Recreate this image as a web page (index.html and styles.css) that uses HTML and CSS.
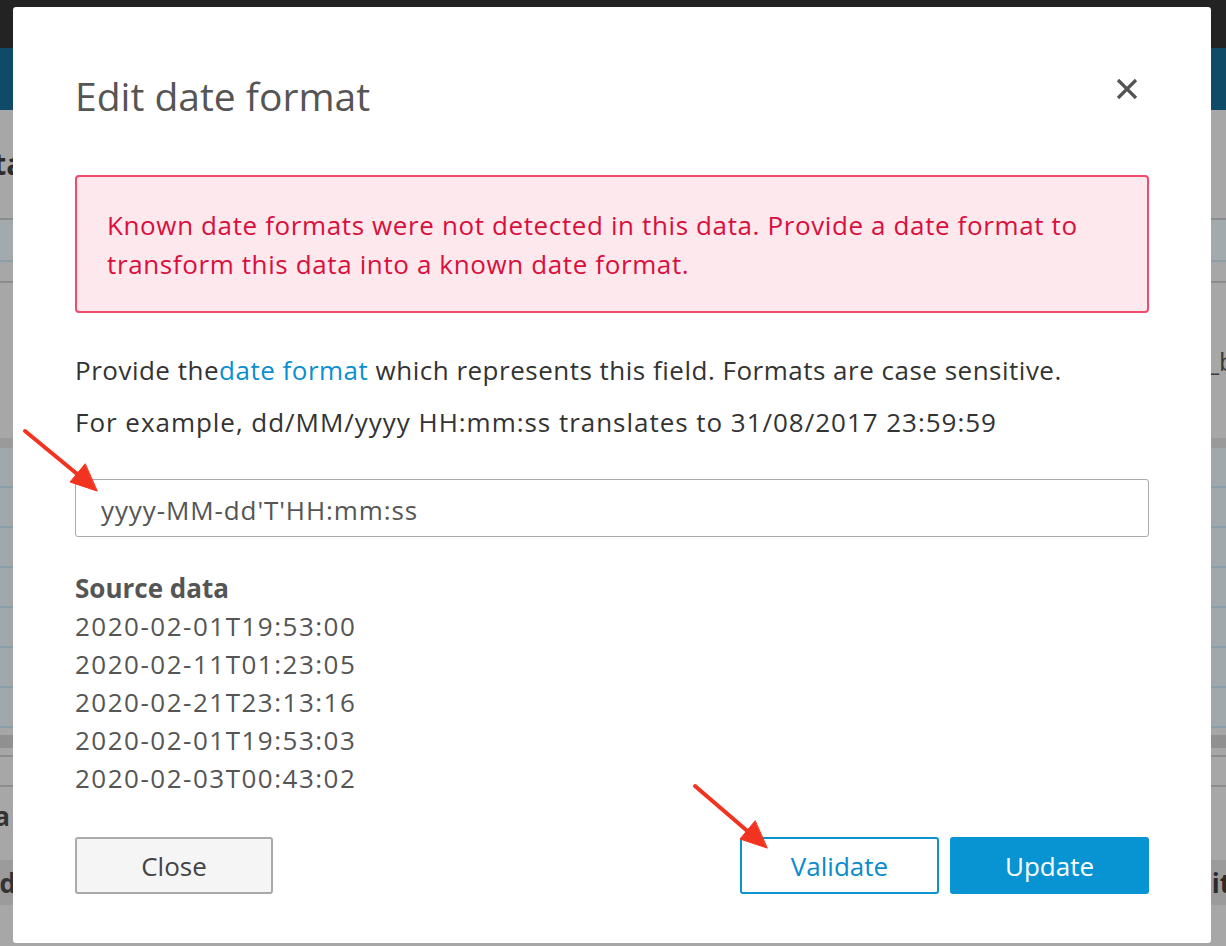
FILE: index.html
```html
<!DOCTYPE html>
<html lang="en">
<head>
<meta charset="utf-8">
<title>Edit date format</title>
<link rel="stylesheet" href="styles.css">
</head>
<body>
<div class="page">
  <div class="topbar"></div>
  <div class="navbar"></div>
  <div class="content">
    <div class="heading"><span class="h-left">Data</span></div>
    <div class="trow tint"></div>
    <div class="trow short"></div>
    <div class="side-label"><span class="r-text">field_b</span></div>
    <div class="band-dark"></div>
    <div class="grid">
      <div class="grow"></div><div class="grow"></div><div class="grow"></div><div class="grow"></div>
      <div class="grow"></div><div class="grow"></div><div class="grow"></div>
    </div>
    <div class="band"></div>
    <div class="plain"></div>
    <div class="label-row"><span class="l-text wide">Data</span></div>
    <div class="dark-row"><span class="l-text">Id</span><span class="r-text bold">Edit</span></div>
  </div>
</div>

<div class="modal" role="dialog" aria-labelledby="modal-title">
  <div class="modal-header">
    <h1 id="modal-title" class="modal-title">Edit date format</h1>
    <button class="icon-close" aria-label="Close">
      <svg width="22" height="22" viewBox="0 0 22 22"><path d="M2 2 L20 20 M20 2 L2 20" stroke="#545454" stroke-width="3.2" fill="none"/></svg>
    </button>
  </div>
  <div class="alert">Known date formats were not detected in this data. Provide a date format to transform this data into a known date format.</div>
  <p class="text first">Provide the<a class="link" href="#">date format</a> which represents this field. Formats are case sensitive.</p>
  <p class="text example">For example, dd/MM/yyyy HH:mm:ss translates to 31/08/2017 23:59:59</p>
  <input class="format-input" type="text" value="yyyy-MM-dd'T'HH:mm:ss">
  <div class="source">
    <div class="source-title">Source data</div>
    <div class="source-line">2020-02-01T19:53:00</div>
    <div class="source-line">2020-02-11T01:23:05</div>
    <div class="source-line">2020-02-21T23:13:16</div>
    <div class="source-line">2020-02-01T19:53:03</div>
    <div class="source-line">2020-02-03T00:43:02</div>
  </div>
  <div class="footer">
    <button class="btn btn-default">Close</button>
    <div class="footer-right">
      <button class="btn btn-outline">Validate</button>
      <button class="btn btn-primary">Update</button>
    </div>
  </div>
</div>

<svg class="arrows" width="1226" height="946" viewBox="0 0 1226 946">
  <g stroke="#f2331f" stroke-width="4" stroke-linecap="round" fill="#f2331f">
    <line x1="25" y1="431" x2="82" y2="478"/>
    <polygon points="97,491 70,482 85,464" stroke-width="1"/>
    <line x1="695" y1="786" x2="752" y2="835"/>
    <polygon points="767,848 740,839 755,821" stroke-width="1"/>
  </g>
</svg>
</body>
</html>
```

FILE: styles.css
```css
* { box-sizing: border-box; }
html, body { margin: 0; padding: 0; }
body {
  width: 1226px;
  height: 946px;
  overflow: hidden;
  position: relative;
  font-family: "Open Sans", "Noto Sans", sans-serif;
  background: #a6a6a6;
}

/* dimmed page behind the modal */
.page { width: 1226px; height: 946px; display: flex; flex-direction: column; }
.topbar { height: 48px; flex: none; background: #232323; }
.navbar { height: 62px; flex: none; background: #0f4b66; }
.content { flex: 1; display: flex; flex-direction: column; background: #a7a7a7; }
.content > div { flex: none; }
.heading { height: 108px; display: flex; align-items: center; padding-bottom: 2px; }
.h-left { font-size: 30px; font-weight: 700; color: #2c2c2c; margin-left: -47px; }
.trow.tint { height: 44px; border-top: 2px solid #8c8c8c; border-bottom: 2px solid #8e9ea6; background: #a2aaae; }
.trow.short { height: 21px; border-bottom: 2px solid #8c8c8c; }
.side-label { height: 155px; display: flex; justify-content: flex-end; align-items: center; }
.r-text { font-size: 26px; color: #3a3a3a; margin-right: -9px; }
.r-text.bold { font-weight: 700; color: #2a2a2a; margin-right: -5px; }
.band-dark { height: 10px; background: #9a9a9a; }
.grid { background: #a0a8ac; }
.grow { height: 40px; border-bottom: 2px solid #8a9ea9; }
.band { height: 27px; border-top: 7px solid #a6a6a6; border-bottom: 7px solid #a6a6a6; background: #909090; }
.plain { height: 32px; border-top: 2px solid #8d8d8d; border-bottom: 2px solid #8d8d8d; }
.label-row { height: 73px; display: flex; align-items: center; padding-bottom: 16px; }
.l-text { font-size: 26px; font-weight: 700; color: #333; margin-left: -9px; }
.l-text.wide { margin-left: -52px; }
.dark-row { height: 45px; background: #9b9b9b; display: flex; justify-content: space-between; align-items: center; }

/* modal */
.modal {
  position: absolute;
  left: 13px;
  top: 7px;
  width: 1198px;
  height: 936px;
  background: #fff;
  border-radius: 3px;
  padding: 66px 62px 50px;
  display: flex;
  flex-direction: column;
  color: #444;
}
.modal-header { display: flex; justify-content: space-between; align-items: center; height: 46px; }
.modal-title { margin: 0; font-size: 39px; font-weight: 400; color: #555; line-height: 46px; }
.icon-close { border: 0; background: none; padding: 0; margin-right: 11px; margin-top: -14px; width: 22px; height: 22px; display: flex; }

.alert {
  margin-top: 56px;
  border: 2px solid #f4496c;
  background: #fde8ed;
  border-radius: 4px;
  padding: 29px 30px 27px;
  color: #d90f3c;
  font-size: 26px;
  letter-spacing: 0.62px;
  line-height: 39px;
}

.text { margin: 16px 0 0; font-size: 26px; letter-spacing: 0.5px; line-height: 36px; color: #333; }
.text.first { margin-top: 39px; }
.text.example { letter-spacing: 0.97px; }
.link { color: #0a8fd1; text-decoration: none; }

.format-input {
  margin-top: 39px;
  height: 58px;
  flex: none;
  width: 100%;
  border: 1px solid #aaa;
  border-radius: 3px;
  padding: 4px 25px 0;
  font-family: inherit;
  font-size: 26px;
  letter-spacing: 0.9px;
  color: #555;
  background: #fff;
  outline: none;
}

.source { margin-top: 32px; font-size: 26px; line-height: 38px; color: #555; }
.source-title { font-weight: 700; }
.source-line { letter-spacing: 1.5px; }

.footer { margin-top: 40px; display: flex; justify-content: space-between; }
.footer-right { display: flex; gap: 11px; }
.btn {
  width: 199px;
  height: 57px;
  border-radius: 3px;
  font-family: inherit;
  font-size: 26px;
  cursor: pointer;
}
.btn-default { width: 198px; background: #f5f5f5; border: 2px solid #aaa; color: #444; }
.btn-outline { background: #fff; border: 2px solid #0b93d0; color: #0a8ccc; }
.btn-primary { background: #0894d2; border: 2px solid #0894d2; color: #fff; }

.arrows { position: absolute; left: 0; top: 0; pointer-events: none; }
```
